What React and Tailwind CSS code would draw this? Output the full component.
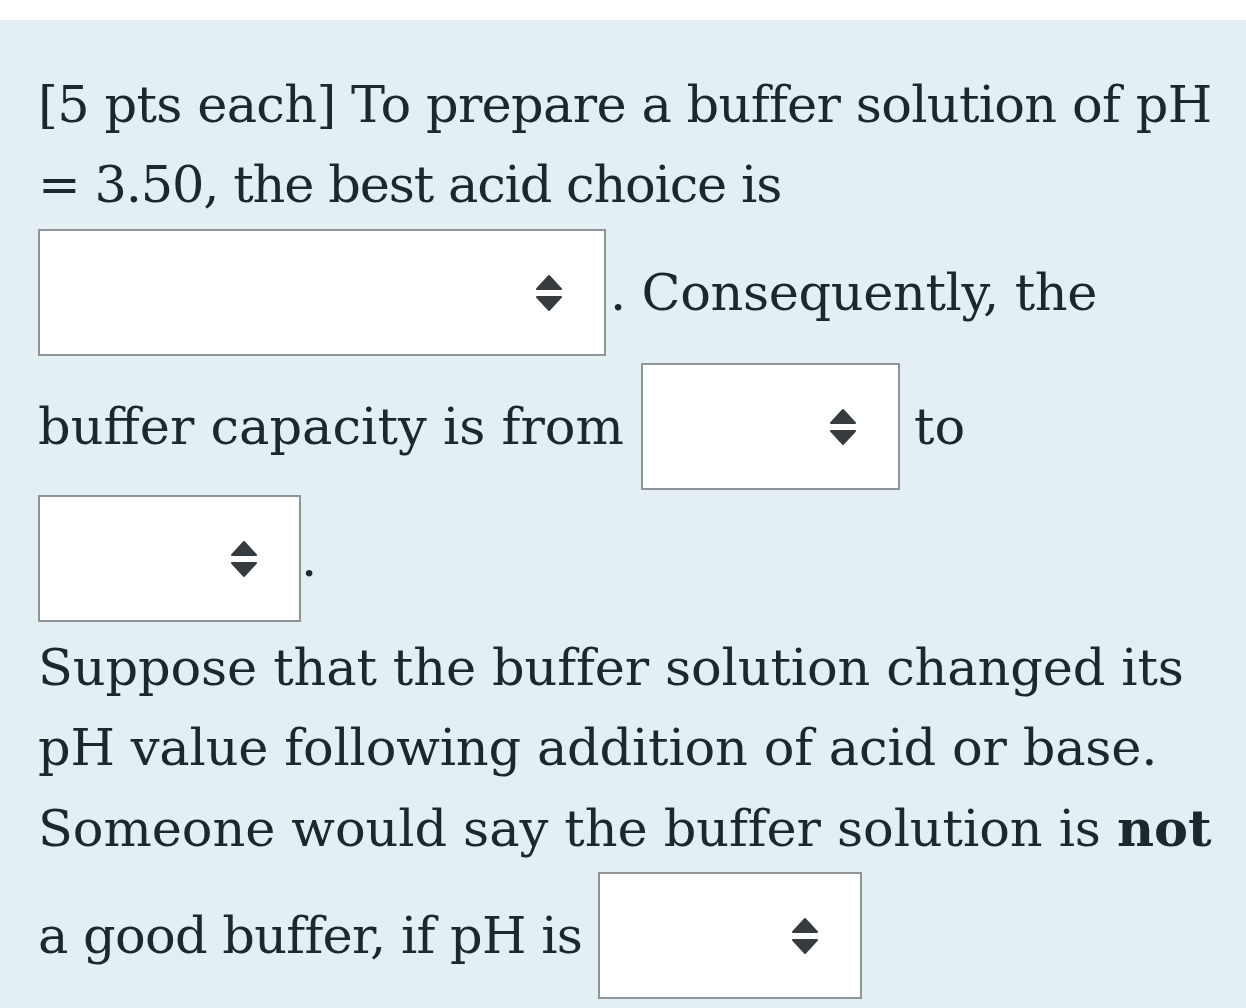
import React from 'react';

function SortArrows() {
  return (
    <svg width="28" height="38" viewBox="0 0 28 38" aria-hidden="true">
      <path d="M14 2 L26 15 L2 15 Z" fill="#353b3e" stroke="#353b3e" strokeWidth="2" strokeLinejoin="round" />
      <path d="M2 23 L26 23 L14 36 Z" fill="#353b3e" stroke="#353b3e" strokeWidth="2" strokeLinejoin="round" />
    </svg>
  );
}

function DropSelect({ className = '' }) {
  return (
    <div className={`flex h-[127px] shrink-0 items-center justify-end border-2 border-[#8e9498] bg-white pr-[41px] ${className}`}>
      <SortArrows />
    </div>
  );
}

export default function App() {
  return (
    <div className="min-h-[1008px] w-[1246px] bg-white" style={{ fontFamily: '"DejaVu Serif", serif' }}>
      <div className="h-[20px] bg-white" />
      <div className="h-[988px] overflow-hidden bg-[#e3eff3] pl-[38px] pt-[45px] text-[51px] leading-[80px] text-[#1c282c]">
        <div className="whitespace-nowrap tracking-[-0.7px]">[5 pts each] To prepare a buffer solution of pH</div>
        <div className="whitespace-nowrap tracking-[-1.2px]">= 3.50, the best acid choice is</div>

        <div className="mt-[4px] flex items-center whitespace-nowrap">
          <DropSelect className="w-[568px]" />
          <span className="ml-[4px] tracking-[-0.4px]">. Consequently, the</span>
        </div>

        <div className="mt-[7px] flex items-center whitespace-nowrap">
          <span>buffer capacity is from</span>
          <DropSelect className="ml-[17px] w-[259px]" />
          <span className="ml-[14px]">to</span>
        </div>

        <div className="mt-[5px] flex items-end whitespace-nowrap">
          <DropSelect className="w-[263px]" />
          <span className="mb-[38px] leading-none">.</span>
        </div>

        <div className="mt-[6px] whitespace-nowrap tracking-[-0.15px]">Suppose that the buffer solution changed its</div>
        <div className="whitespace-nowrap tracking-[-0.2px]">pH value following addition of acid or base.</div>
        <div className="whitespace-nowrap tracking-[-0.1px]">
          Someone would say the buffer solution is <b>not</b>
        </div>

        <div className="mt-[3px] flex items-center whitespace-nowrap">
          <span className="tracking-[-0.75px]">a good buffer, if pH is</span>
          <DropSelect className="ml-[16px] w-[264px]" />
        </div>
      </div>
    </div>
  );
}
